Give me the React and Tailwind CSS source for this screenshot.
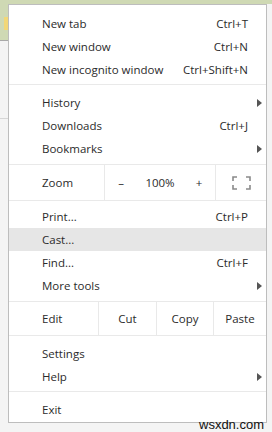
import React from 'react';

const font = { fontFamily: '"Open Sans", "Noto Sans", sans-serif' };

function Arrow() {
  return (
    <svg width="5" height="8" viewBox="0 0 5 8" className="absolute right-[4px] top-1/2 -translate-y-1/2">
      <path d="M0 0 L5 4 L0 8 Z" fill="#555" />
    </svg>
  );
}

function Item({ label, shortcut, submenu, active }) {
  return (
    <div className={`relative flex items-center h-[23px] pl-[33px] pr-[18px] ${active ? 'bg-[#e6e6e6]' : ''}`}>
      <span className="flex-1">{label}</span>
      {shortcut && <span>{shortcut}</span>}
      {submenu && <Arrow />}
    </div>
  );
}

function Sep() {
  return (
    <div className="pt-[3px] pb-[6px]">
      <div className="h-px bg-[#e9e9e9]" />
    </div>
  );
}

function FullscreenIcon() {
  return (
    <svg width="19" height="14" viewBox="0 0 19 14" fill="none" stroke="#8a8a8a" strokeWidth="1.6">
      <path d="M1 5 V1 H5" />
      <path d="M14 1 H18 V5" />
      <path d="M18 9 V13 H14" />
      <path d="M5 13 H1 V9" />
    </svg>
  );
}

export default function App() {
  return (
    <div className="relative w-[272px] h-[432px] overflow-hidden bg-[#f4f4f4]" style={font}>
      {/* browser bits behind the menu */}
      <div className="absolute left-0 top-0 w-full h-[4px] bg-[#cfd9b4]" />
      <div className="absolute left-0 top-0 w-[8px] h-[40px] bg-[#cfd9b4]" />
      <div className="absolute left-[4px] top-[17px] w-[4px] h-[13px] bg-[#f2d777]" />
      <div className="absolute left-0 top-[40px] w-[8px] h-px bg-[#a9a9a9]" />
      <div className="absolute left-0 top-[118px] w-[8px] h-px bg-[#d6d6d6]" />

      <div className="relative ml-[8px] mt-[4px] w-[259px] bg-white border border-[#bdbdbd] pt-[7px] pb-[1px] text-[11.5px] text-[#2b2b2b]">
        <Item label="New tab" shortcut="Ctrl+T" />
        <Item label="New window" shortcut="Ctrl+N" />
        <Item label="New incognito window" shortcut="Ctrl+Shift+N" />
        <Sep />
        <Item label="History" submenu />
        <Item label="Downloads" shortcut="Ctrl+J" />
        <Item label="Bookmarks" submenu />
        <div className="pt-[4px]">
          <div className="h-px bg-[#e9e9e9]" />
        </div>
        <div className="flex h-[36px] items-center border-b border-[#e9e9e9]">
          <span className="w-[95px] pl-[33px]">Zoom</span>
          <div className="flex h-full w-[111px] items-center border-l border-[#e9e9e9]">
            <span className="w-[32px] text-center">–</span>
            <span className="w-[46px] text-center">100%</span>
            <span className="w-[32px] text-center">+</span>
          </div>
          <div className="flex h-full flex-1 items-center justify-center border-l border-[#e9e9e9]">
            <FullscreenIcon />
          </div>
        </div>
        <div className="h-[4px]" />
        <Item label="Print..." shortcut="Ctrl+P" />
        <Item label="Cast..." active />
        <Item label="Find..." shortcut="Ctrl+F" />
        <Item label="More tools" submenu />
        <div className="pt-[4px]">
          <div className="h-px bg-[#e9e9e9]" />
        </div>
        <div className="flex h-[34px] items-center border-b border-[#e9e9e9]">
          <span className="w-[89px] pl-[33px]">Edit</span>
          <span className="flex h-full w-[58px] items-center justify-center border-l border-[#e9e9e9]">Cut</span>
          <span className="flex h-full w-[57px] items-center justify-center border-l border-[#e9e9e9]">Copy</span>
          <span className="flex h-full flex-1 items-center justify-center border-l border-[#e9e9e9]">Paste</span>
        </div>
        <div className="h-[6px]" />
        <Item label="Settings" />
        <Item label="Help" submenu />
        <Sep />
        <Item label="Exit" />
      </div>

      <div className="absolute left-[199px] top-[418px] text-[13px] leading-none text-[#111]" style={{ fontFamily: '"Liberation Sans", Arial, sans-serif' }}>
        wsxdn.com
      </div>
    </div>
  );
}
